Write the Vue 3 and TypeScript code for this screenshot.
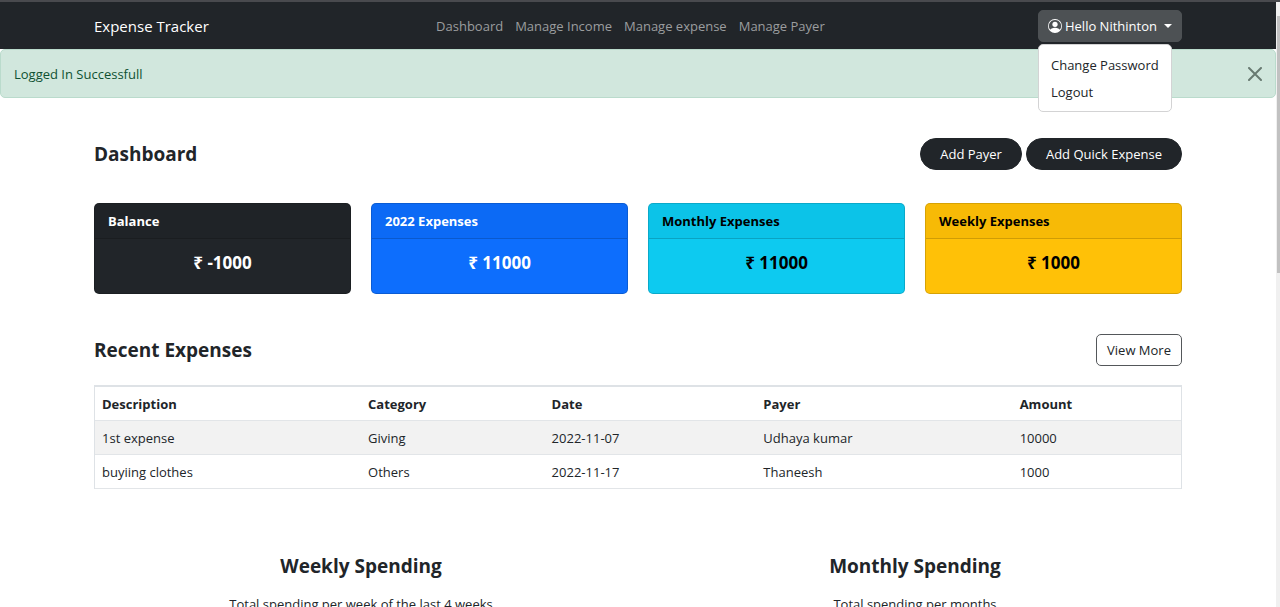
<script setup lang="ts">
import { ref } from 'vue'

interface Expense {
  description: string
  category: string
  date: string
  payer: string
  amount: number
}

const navLinks: string[] = ['Dashboard', 'Manage Income', 'Manage expense', 'Manage Payer']

const cards: { title: string; value: string; tone: string }[] = [
  { title: 'Balance', value: '₹ -1000', tone: 'dark' },
  { title: '2022 Expenses', value: '₹ 11000', tone: 'primary' },
  { title: 'Monthly Expenses', value: '₹ 11000', tone: 'info' },
  { title: 'Weekly Expenses', value: '₹ 1000', tone: 'warning' },
]

const expenses: Expense[] = [
  { description: '1st expense', category: 'Giving', date: '2022-11-07', payer: 'Udhaya kumar', amount: 10000 },
  { description: 'buyiing clothes', category: 'Others', date: '2022-11-17', payer: 'Thaneesh', amount: 1000 },
]

const charts: { title: string; note: string }[] = [
  { title: 'Weekly Spending', note: 'Total spending per week of the last 4 weeks' },
  { title: 'Monthly Spending', note: 'Total spending per months' },
]

const menuOpen = ref(true)
const alertOpen = ref(true)
</script>

<template>
  <div class="window">
    <div class="page">
      <header class="navbar">
        <div class="container nav-row">
          <a class="brand" href="#">Expense Tracker</a>
          <nav class="links">
            <a v-for="link in navLinks" :key="link" href="#">{{ link }}</a>
          </nav>
          <div class="dropdown">
            <button class="user" type="button" :aria-expanded="menuOpen" @click="menuOpen = !menuOpen">
              <svg class="avatar" viewBox="0 0 16 16" aria-hidden="true">
                <path d="M11 6a3 3 0 1 1-6 0 3 3 0 0 1 6 0z" />
                <path fill-rule="evenodd" d="M0 8a8 8 0 1 1 16 0A8 8 0 0 1 0 8zm8-7a7 7 0 0 0-5.468 11.37C3.242 11.226 4.805 10 8 10s4.757 1.225 5.468 2.37A7 7 0 0 0 8 1z" />
              </svg>
              <span>Hello Nithinton</span>
              <span class="caret"></span>
            </button>
            <div v-if="menuOpen" class="menu">
              <a href="#">Change Password</a>
              <a href="#">Logout</a>
            </div>
          </div>
        </div>
      </header>

      <div v-if="alertOpen" class="alert" role="alert">
        <span>Logged In Successfull</span>
        <button class="close" type="button" aria-label="Close" @click="alertOpen = false">
          <svg viewBox="0 0 14 14" aria-hidden="true">
            <path d="M1 1 13 13M13 1 1 13" />
          </svg>
        </button>
      </div>

      <main class="container">
        <div class="section-head">
          <h1>Dashboard</h1>
          <div class="actions">
            <button class="pill" type="button">Add Payer</button>
            <button class="pill" type="button">Add Quick Expense</button>
          </div>
        </div>

        <section class="cards">
          <article v-for="card in cards" :key="card.title" class="card" :class="card.tone">
            <h2>{{ card.title }}</h2>
            <p>{{ card.value }}</p>
          </article>
        </section>

        <div class="section-head recent">
          <h1>Recent Expenses</h1>
          <button class="outline" type="button">View More</button>
        </div>

        <table>
          <colgroup>
            <col class="c-description" />
            <col class="c-category" />
            <col class="c-date" />
            <col class="c-payer" />
            <col />
          </colgroup>
          <thead>
            <tr>
              <th scope="col">Description</th>
              <th scope="col">Category</th>
              <th scope="col">Date</th>
              <th scope="col">Payer</th>
              <th scope="col">Amount</th>
            </tr>
          </thead>
          <tbody>
            <tr v-for="row in expenses" :key="row.date">
              <td>{{ row.description }}</td>
              <td>{{ row.category }}</td>
              <td>{{ row.date }}</td>
              <td>{{ row.payer }}</td>
              <td>{{ row.amount }}</td>
            </tr>
          </tbody>
        </table>

        <section class="charts">
          <div v-for="chart in charts" :key="chart.title">
            <h1>{{ chart.title }}</h1>
            <p>{{ chart.note }}</p>
          </div>
        </section>
      </main>
    </div>
    <div class="scrollbar" aria-hidden="true"><div class="thumb"></div></div>
  </div>
</template>

<style>
body {
  margin: 0;
  background: #fff;
}
</style>

<style scoped>
.window {
  display: flex;
  height: 100vh;
  overflow: hidden;
  box-sizing: border-box;
  border-top: 2px solid #494a4e;
  font-family: 'Open Sans', 'Noto Sans', sans-serif;
  font-size: 13px;
  line-height: 20px;
  color: #212529;
}

.window *,
.window *::before {
  box-sizing: border-box;
}

.page {
  flex: 1;
  min-width: 0;
}

.scrollbar {
  width: 4px;
  padding: 14px 0 0 1px;
  background: #f0f0f0;
}

.thumb {
  height: 44%;
  max-height: 257px;
  background: #c1c1c1;
}

.container {
  width: 100%;
  max-width: 1088px;
  margin: 0 auto;
}

button {
  font: inherit;
  cursor: pointer;
}

a {
  color: inherit;
  text-decoration: none;
}

h1,
h2,
p {
  margin: 0;
}

h1 {
  font-size: 19px;
  line-height: 24px;
  font-weight: 700;
}

.navbar {
  padding: 8px 0 7px;
  background: #212529;
}

.nav-row {
  display: flex;
  align-items: center;
  justify-content: space-between;
}

.brand {
  margin-right: 14px;
  font-size: 15px;
  color: #fff;
}

.links {
  display: flex;
  color: #9b9d9f;
}

.links a {
  padding: 0 6px;
}

.dropdown {
  position: relative;
}

.user {
  display: flex;
  align-items: center;
  height: 32px;
  padding: 0 9px;
  border: 1px solid #4d5154;
  border-radius: 5px;
  background: #4d5154;
  color: #fff;
}

.avatar {
  width: 14px;
  height: 14px;
  margin-right: 3px;
  fill: #fff;
}

.caret {
  margin-left: 7px;
  border-top: 4px solid #fff;
  border-left: 4px solid transparent;
  border-right: 4px solid transparent;
}

.menu {
  position: absolute;
  top: 100%;
  left: 0;
  z-index: 2;
  margin-top: 2px;
  padding: 7px 0 5px;
  border: 1px solid #d3d3d4;
  border-radius: 5px;
  background: #fff;
}

.menu a {
  display: block;
  padding: 3px 12px 4px;
  white-space: nowrap;
}

.alert {
  display: flex;
  align-items: center;
  justify-content: space-between;
  padding: 14px 13px 13px;
  border: 1px solid #badbcc;
  border-radius: 5px;
  background: #d1e7dd;
  color: #0f5132;
}

.close {
  display: flex;
  padding: 0;
  border: 0;
  background: none;
}

.close svg {
  width: 14px;
  height: 14px;
  fill: none;
  stroke: #687a71;
  stroke-width: 2;
  stroke-linecap: round;
}

.section-head {
  display: flex;
  align-items: center;
  justify-content: space-between;
  margin-top: 40px;
}

.actions {
  display: flex;
  gap: 4px;
}

.pill,
.outline {
  height: 32px;
  border: 1px solid #212529;
}

.pill {
  padding: 0 19px;
  border-radius: 16px;
  background: #212529;
  color: #fff;
}

.outline {
  padding: 0 10px;
  border-color: #54575a;
  border-radius: 5px;
  background: #fff;
  color: #212529;
}

.cards {
  display: grid;
  grid-template-columns: repeat(4, 1fr);
  gap: 20px;
  margin-top: 33px;
}

.card {
  overflow: hidden;
  border: 1px solid rgba(0, 0, 0, 0.16);
  border-radius: 5px;
}

.card h2 {
  padding: 7px 13px;
  border-bottom: 1px solid rgba(0, 0, 0, 0.16);
  background: rgba(0, 0, 0, 0.03);
  font-size: 13px;
  line-height: 20px;
  font-weight: 700;
}

.card p {
  padding: 14px 13px 20px;
  font-size: 17px;
  line-height: 20px;
  font-weight: 700;
  text-align: center;
}

.dark {
  background: #212529;
  color: #fff;
}

.primary {
  background: #0d6efd;
  color: #fff;
}

.info {
  background: #0dcaf0;
  color: #000;
}

.warning {
  background: #ffc107;
  color: #000;
}

table {
  width: 100%;
  margin-top: 19px;
  table-layout: fixed;
  border-collapse: separate;
  border-spacing: 0;
  border: 1px solid #dee2e6;
  border-top-width: 2px;
  border-bottom: 0;
}

.c-description {
  width: 24.5%;
}

.c-category {
  width: 16.9%;
}

.c-date {
  width: 19.5%;
}

.c-payer {
  width: 23.6%;
}

th,
td {
  padding: 7px 7px 6px;
  border-bottom: 1px solid #e2e5e8;
  text-align: left;
}

th {
  font-weight: 700;
}

tbody tr:nth-child(odd) {
  background: #f2f2f2;
}

.charts {
  display: grid;
  grid-template-columns: repeat(2, 1fr);
  gap: 20px;
  margin-top: 65px;
  text-align: center;
}

.charts p {
  margin-top: 16px;
}
</style>
